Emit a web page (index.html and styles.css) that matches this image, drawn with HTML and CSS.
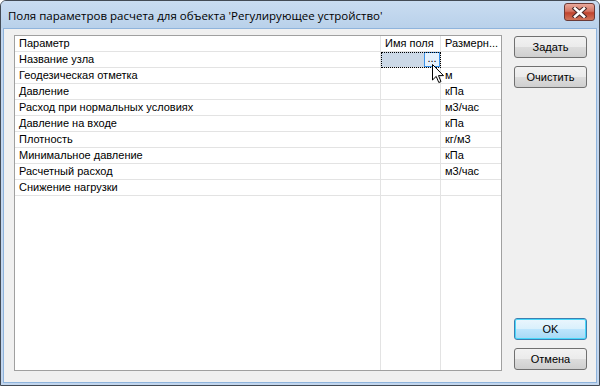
FILE: index.html
```html
<!DOCTYPE html>
<html>
<head>
<meta charset="utf-8" />
<title>Поля параметров расчета</title>
<link rel="stylesheet" href="styles.css">
</head>
<body>
<div class="window">
  <div class="titlebar">
    <span class="caption">Поля параметров расчета для объекта 'Регулирующее устройство'</span>
    <div class="close-btn">
      <svg width="17" height="11" viewBox="0 0 17 11">
        <path d="M4 1.5 L13 9.5 M13 1.5 L4 9.5" stroke="#4a2a28" stroke-width="4.6" stroke-linecap="square" fill="none"/>
        <path d="M4 1.5 L13 9.5 M13 1.5 L4 9.5" stroke="#fff" stroke-width="2.6" stroke-linecap="square" fill="none"/>
      </svg>
    </div>
  </div>
  <div class="client">
    <div class="grid">
      <table>
        <tr class="head">
          <td class="c1">Параметр</td><td class="c2">Имя поля</td><td class="c3">Размерн...</td>
        </tr>
        <tr>
          <td class="c1">Название узла</td>
          <td class="c2 sel"><span class="dots">...</span></td>
          <td class="c3"></td>
        </tr>
        <tr><td class="c1">Геодезическая отметка</td><td class="c2"></td><td class="c3">м</td></tr>
        <tr><td class="c1">Давление</td><td class="c2"></td><td class="c3">кПа</td></tr>
        <tr><td class="c1">Расход при нормальных условиях</td><td class="c2"></td><td class="c3">м3/час</td></tr>
        <tr><td class="c1">Давление на входе</td><td class="c2"></td><td class="c3">кПа</td></tr>
        <tr><td class="c1">Плотность</td><td class="c2"></td><td class="c3">кг/м3</td></tr>
        <tr><td class="c1">Минимальное давление</td><td class="c2"></td><td class="c3">кПа</td></tr>
        <tr><td class="c1">Расчетный расход</td><td class="c2"></td><td class="c3">м3/час</td></tr>
        <tr><td class="c1">Снижение нагрузки</td><td class="c2"></td><td class="c3"></td></tr>
        <tr class="filler"><td class="c1"></td><td class="c2"></td><td class="c3"></td></tr>
      </table>
      <svg class="cursor" width="13" height="20" viewBox="0 0 13 20">
        <path d="M0.5 0.5 L0.5 16 L4.2 12.4 L6.8 18.5 L9 17.6 L6.5 11.6 L11.5 11.6 Z" fill="#fff" stroke="#000" stroke-width="1"/>
      </svg>
    </div>
    <div class="buttons">
      <div class="top-btns">
        <div class="btn">Задать</div>
        <div class="btn">Очистить</div>
      </div>
      <div class="bottom-btns">
        <div class="btn default">OK</div>
        <div class="btn">Отмена</div>
      </div>
    </div>
  </div>
</div>
</body>
</html>
```

FILE: styles.css
```css
body {
  margin: 0;
  background: #fff;
  font-family: "Liberation Sans", Arial, sans-serif;
  font-size: 11px;
  color: #000;
}
.window {
  width: 600px;
  height: 386px;
  box-sizing: border-box;
  border: 1px solid #434b55;
  border-radius: 6px 6px 0 0;
  background: #c2d6ee;
  display: flex;
  flex-direction: column;
  overflow: hidden;
}
.titlebar {
  height: 27px;
  display: flex;
  align-items: center;
  justify-content: space-between;
  padding: 0 4px 0 7px;
  background: linear-gradient(#c9dcf1, #b9d1ea);
}
.caption {
  font-family: "Open Sans", "Noto Sans", sans-serif;
  font-size: 11.5px;
  color: #000;
  margin-top: 2px;
}
.close-btn {
  width: 29px;
  height: 16px;
  margin-top: -5px;
  border: 1px solid #6b3a36;
  border-radius: 3px;
  background: linear-gradient(#e9a99c, #d47563 45%, #c1442e 55%, #d0765c);
  display: flex;
  align-items: center;
  justify-content: center;
}
.client {
  flex: 1;
  margin: 0 2px 2px 2px;
  border: 1px solid #8fb4dc;
  background: #f0f0f0;
  display: flex;
  padding: 6px 9px 11px 10px;
}
.grid {
  position: relative;
  width: 486px;
  height: 334px;
  border: 1px solid #a0a0a0;
  background: #fff;
}
.grid table {
  border-collapse: collapse;
  width: 486px;
  height: 334px;
  table-layout: fixed;
}
.grid td {
  height: 15px;
  padding: 0 0 0 4px;
  border-bottom: 1px solid #e3e3e3;
  border-right: 1px solid #e3e3e3;
  white-space: nowrap;
  overflow: hidden;
  line-height: 15px;
  vertical-align: middle;
}
.grid td.c1 { width: 361px; }
.grid td.c2 { width: 55px; }
.grid td.c3 { border-right: none; }
.grid tr.filler td {
  height: auto;
  border-bottom: none;
}
.grid td.sel {
  padding: 0;
  background: #ccd9e7;
  outline: 1px dotted #000;
  outline-offset: -1px;
  text-align: right;
}
.dots {
  display: inline-block;
  width: 14px;
  height: 13px;
  line-height: 10px;
  border: 1px solid #3b93e9;
  background: #e5f1fc;
  text-align: center;
  vertical-align: top;
}
.cursor {
  position: absolute;
  left: 417px;
  top: 28px;
}
.buttons {
  flex: 1;
  display: flex;
  flex-direction: column;
  justify-content: space-between;
  align-items: flex-end;
  padding: 1px 0 1px 0;
}
.top-btns, .bottom-btns {
  display: flex;
  flex-direction: column;
  gap: 8px;
}
.btn {
  width: 71px;
  height: 20px;
  line-height: 20px;
  text-align: center;
  border: 1px solid #707070;
  border-radius: 3px;
  background: linear-gradient(#f2f2f2, #ebebeb 50%, #dddddd 50%, #cfcfcf);
}
.btn.default {
  border-color: #3c7fb1;
  box-shadow: inset 0 0 0 1px #48d8fb;
  background: linear-gradient(#eaf6fd, #d9f0fc 50%, #bee6fd 50%, #a7d9f5);
}
```
